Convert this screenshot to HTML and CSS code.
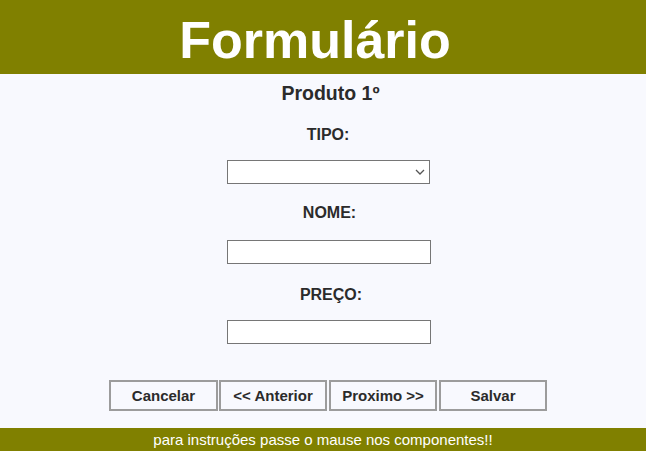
FILE: index.html
```html
<!DOCTYPE html>
<html lang="pt">
<head>
<meta charset="utf-8">
<link rel="stylesheet" href="styles.css">
</head>
<body>
<header class="top"><h1 class="title">Formulário</h1></header>
<main class="form">
  <h2 class="product">Produto 1º</h2>
  <label class="label first">TIPO:</label>
  <div class="select"><svg class="chev" width="10" height="6" viewBox="0 0 10 6"><path d="M1 1 L5 5 L9 1" fill="none" stroke="#555" stroke-width="1.3"/></svg></div>
  <label class="label">NOME:</label>
  <div class="input"></div>
  <label class="label price">PREÇO:</label>
  <div class="input last"></div>
  <div class="buttons">
    <button class="btn wide">Cancelar</button>
    <button class="btn">&lt;&lt; Anterior</button>
    <button class="btn">Proximo &gt;&gt;</button>
    <button class="btn">Salvar</button>
  </div>
</main>
<footer class="foot">para instruções passe o mause nos componentes!!</footer>
</body>
</html>
```
FILE: styles.css
```css
html, body { margin: 0; padding: 0; }
body {
  width: 646px;
  height: 451px;
  background: #f8f9fe;
  font-family: "Liberation Sans", Arial, sans-serif;
  color: #2b2b2b;
  display: flex;
  flex-direction: column;
  overflow: hidden;
}
.top {
  height: 74px;
  background: #808000;
  display: flex;
  justify-content: center;
  align-items: center;
  padding-right: 16px;
}
.title {
  margin: 0;
  color: #fff;
  font-size: 52px;
  font-weight: bold;
  line-height: 74px;
  padding-top: 6px;
}
.form {
  flex: 1;
  display: flex;
  flex-direction: column;
  align-items: center;
  padding-left: 10px;
}
.product {
  margin: 8px 0 0;
  font-size: 19.5px;
  line-height: 23px;
  font-weight: bold;
  padding-left: 5px;
}
.label {
  font-size: 16px;
  font-weight: bold;
  line-height: 18px;
  margin-top: 21px;
  padding-left: 3px;
}
.label.first { margin-top: 21px; padding-left: 0; }
.label.price { padding-left: 6px; }
.select {
  box-sizing: border-box;
  width: 203px;
  height: 24px;
  margin-top: 16px;
  background: #fff;
  border: 1px solid #767676;
  display: flex;
  justify-content: flex-end;
  align-items: center;
  padding-right: 4px;
}
.input {
  box-sizing: border-box;
  width: 204px;
  height: 24px;
  margin-top: 18px;
  margin-left: 2px;
  background: #fff;
  border: 1px solid #767676;
}
.select + .label { margin-top: 20px; }
.input + .label { margin-top: 22px; }
.input.last { margin-top: 16px; }
.buttons {
  display: flex;
  gap: 2px;
  margin-top: 36px;
}
.btn {
  box-sizing: border-box;
  width: 108px;
  height: 31px;
  background: #f8f9fe;
  border: 2px solid #9c9c9c;
  font-family: "Liberation Sans", Arial, sans-serif;
  font-size: 15px;
  font-weight: bold;
  color: #2b2b2b;
  padding: 0;
}
.btn.wide { width: 109px; margin-right: -1px; }
.foot {
  height: 23px;
  background: #808000;
  color: #fff;
  font-size: 15px;
  line-height: 24px;
  text-align: center;
}
```
